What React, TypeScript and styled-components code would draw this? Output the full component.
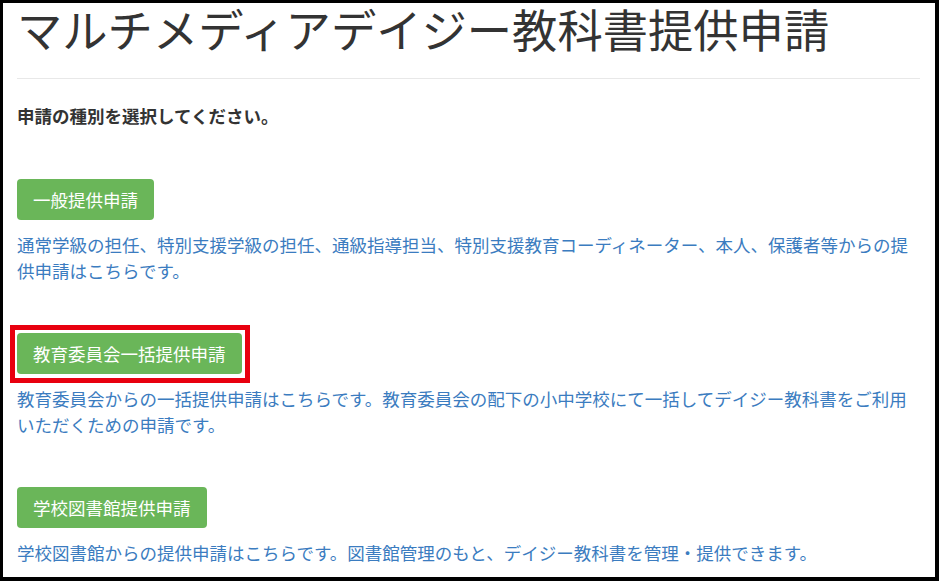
import React from "react";
import styled, { createGlobalStyle } from "styled-components";

const GlobalStyle = createGlobalStyle`
  html, body {
    margin: 0;
    padding: 0;
    background: #000;
  }
  body {
    font-family: "Noto Sans CJK JP", "Noto Sans", sans-serif;
  }
`;

export const Frame = styled.div`
  box-sizing: border-box;
  width: 939px;
  height: 581px;
  border-style: solid;
  border-color: #000;
  border-width: 3px 4px 4px 3px;
  background: #fff;
  padding: 0 15px 0 14px;
`;

export const Title = styled.h1`
  margin: 0;
  font-size: 45.3px;
  line-height: 50px;
  font-weight: 400;
  color: #333;
  white-space: nowrap;
`;

export const Divider = styled.hr`
  margin: 25px 0 0;
  border: 0;
  border-top: 1px solid #e8e8e8;
`;

export const Lead = styled.p`
  margin: 24px 0 0;
  font-size: 17.5px;
  line-height: 25px;
  font-weight: 700;
  color: #333;
`;

export const Section = styled.section<{ $first?: boolean }>`
  margin-top: ${(p) => (p.$first ? "51px" : "49px")};
`;

export const ApplyButton = styled.button<{ $highlighted?: boolean }>`
  position: relative;
  display: inline-block;
  border: 0;
  border-radius: 4px;
  padding: 8px 16px;
  background: #6ab659;
  color: #fff;
  font-family: inherit;
  font-size: 17.5px;
  line-height: 25px;
  cursor: pointer;

  &::after {
    content: "";
    display: ${(p) => (p.$highlighted ? "block" : "none")};
    position: absolute;
    top: -8px;
    left: -7px;
    right: -8px;
    bottom: -9px;
    border: 5px solid #e8000f;
    pointer-events: none;
  }
`;

export const Description = styled.p`
  margin: 12px 0 0;
  font-size: 17.5px;
  line-height: 26px;
  color: #3b7cc0;
`;

const items = [
  {
    label: "一般提供申請",
    text: "通常学級の担任、特別支援学級の担任、通級指導担当、特別支援教育コーディネーター、本人、保護者等からの提供申請はこちらです。",
  },
  {
    label: "教育委員会一括提供申請",
    text: "教育委員会からの一括提供申請はこちらです。教育委員会の配下の小中学校にて一括してデイジー教科書をご利用いただくための申請です。",
    highlighted: true,
  },
  {
    label: "学校図書館提供申請",
    text: "学校図書館からの提供申請はこちらです。図書館管理のもと、デイジー教科書を管理・提供できます。",
  },
];

const App = () => {
  return (
    <>
      <GlobalStyle />
      <Frame>
        <Title>マルチメディアデイジー教科書提供申請</Title>
        <Divider />
        <Lead>申請の種別を選択してください。</Lead>
        {items.map((item, i) => (
          <Section key={item.label} $first={i === 0}>
            <ApplyButton $highlighted={item.highlighted}>{item.label}</ApplyButton>
            <Description>{item.text}</Description>
          </Section>
        ))}
      </Frame>
    </>
  );
};

export default App;
